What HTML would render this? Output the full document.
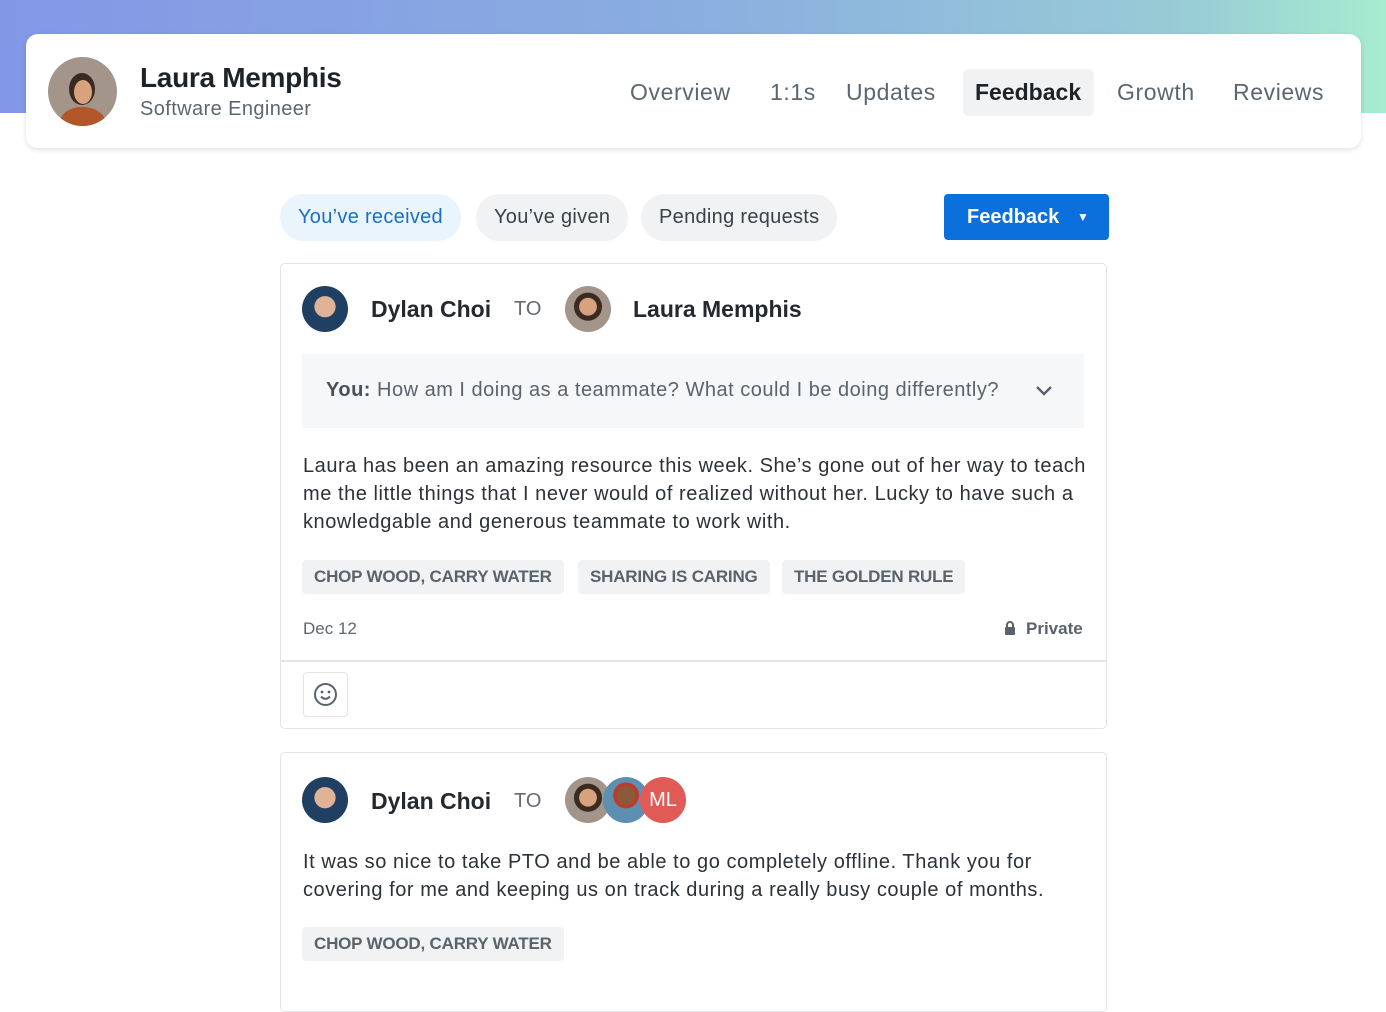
<!DOCTYPE html>
<html><head><meta charset="utf-8"><style>
*{box-sizing:border-box;margin:0;padding:0}
body{width:1386px;height:1000px;overflow:hidden;background:#fff;font-family:"Liberation Sans",sans-serif;position:relative;color:#1f2329}
.abs{position:absolute}
.band{left:0;top:0;width:1386px;height:113px;background:linear-gradient(90deg,#8397e6 0%,#8aaee0 50%,#98cbd6 85%,#a6eccf 100%)}
.hdr{left:26px;top:34px;width:1335px;height:114px;background:#fff;border-radius:12px;box-shadow:0 2px 6px rgba(0,0,0,.12)}
.nav{font-size:23px;color:#5d6670;top:79px;letter-spacing:0.6px}
.pill{top:194px;height:47px;border-radius:24px;background:#f1f2f4;font-size:20px;color:#3b4148;line-height:47px;padding:0 18px;letter-spacing:0.3px}
.card{left:280px;width:827px;border:1.5px solid #e2e4e7;border-radius:5px;background:#fff}
.name{font-size:23px;font-weight:bold;color:#24292f}
.to{font-size:20px;color:#646b73}
.tag{height:34px;line-height:34px;background:#f0f2f4;border-radius:4px;font-size:17px;font-weight:bold;color:#5a626b;padding:0 12px;top:560px;letter-spacing:-0.2px}
.body{font-size:20px;line-height:28px;color:#2c3238;letter-spacing:0.55px}
.av{border-radius:50%;overflow:hidden}
</style></head><body>
<div class="abs band"></div>
<div class="abs hdr"></div>
<svg class="abs" style="left:48px;top:57px" width="69" height="69" viewBox="0 0 69 69"><defs><clipPath id="c1"><circle cx="34.5" cy="34.5" r="34.5"/></clipPath></defs><g clip-path="url(#c1)"><rect width="69" height="69" fill="#a3958a"/><path d="M10 69 Q14 50 34 50 Q55 50 60 69Z" fill="#b3562a"/><ellipse cx="34" cy="32" rx="13" ry="16" fill="#3a2a22"/><ellipse cx="35" cy="35" rx="9" ry="12" fill="#d9a27e"/></g></svg>
<div class="abs" style="left:140px;top:62px;font-size:28px;font-weight:bold;color:#1e2328;letter-spacing:-0.3px">Laura Memphis</div>
<div class="abs" style="left:140px;top:98px;font-size:20px;color:#5d6670;letter-spacing:0.4px">Software Engineer</div>
<div class="abs nav" style="left:630px">Overview</div>
<div class="abs nav" style="left:770px">1:1s</div>
<div class="abs nav" style="left:846px">Updates</div>
<div class="abs" style="left:963px;top:69px;width:131px;height:47px;background:#f1f2f4;border-radius:6px"></div>
<div class="abs nav" style="left:975px;color:#1e2328;font-weight:bold;letter-spacing:0">Feedback</div>
<div class="abs nav" style="left:1117px">Growth</div>
<div class="abs nav" style="left:1233px">Reviews</div>

<div class="abs pill" style="left:280px;background:#eaf4fc;color:#1a6fc4">You’ve received</div>
<div class="abs pill" style="left:476px">You’ve given</div>
<div class="abs pill" style="left:641px">Pending requests</div>
<div class="abs" style="left:944px;top:194px;width:165px;height:46px;background:#0b6fdc;border-radius:4px;color:#fff;font-size:20px;font-weight:bold;line-height:46px;padding-left:23px">Feedback<span style="position:absolute;left:133px;top:0;font-size:12px">▼</span></div>

<div class="abs card" style="top:263px;height:466px"></div>
<div class="abs av" style="left:302px;top:286px;width:46px;height:46px;background:radial-gradient(circle at 50% 45%,#e0b397 0 30%,#1f3f63 32%)"></div>
<div class="abs name" style="left:371px;top:296px">Dylan Choi</div>
<div class="abs to" style="left:514px;top:298px">TO</div>
<div class="abs av" style="left:565px;top:286px;width:46px;height:46px;background:radial-gradient(circle at 50% 45%,#d9a27e 0 25%,#3a2a22 27% 40%,#a3958a 42%)"></div>
<div class="abs name" style="left:633px;top:296px">Laura Memphis</div>
<div class="abs" style="left:302px;top:354px;width:782px;height:74px;background:#f6f7f9"></div>
<div class="abs" style="left:326px;top:379px;font-size:20px;color:#5a626b;letter-spacing:0.5px"><b style="color:#4a5057">You:</b> How am I doing as a teammate? What could I be doing differently?</div>
<svg class="abs" style="left:1034px;top:384px" width="20" height="14" viewBox="0 0 20 14"><path d="M3 3 L10 10 L17 3" fill="none" stroke="#5a626b" stroke-width="2.4"/></svg>
<div class="abs body" style="left:303px;top:452px;width:790px">Laura has been an amazing resource this week. She’s gone out of her way to teach me the little things that I never would of realized without her. Lucky to have such a knowledgable and generous teammate to work with.</div>
<div class="abs tag" style="left:302px">CHOP WOOD, CARRY WATER</div>
<div class="abs tag" style="left:578px">SHARING IS CARING</div>
<div class="abs tag" style="left:782px">THE GOLDEN RULE</div>
<div class="abs" style="left:303px;top:619px;font-size:17px;color:#5d6670">Dec 12</div>
<svg class="abs" style="left:1004px;top:620px" width="12" height="16" viewBox="0 0 12 16"><path d="M3 7V5a3 3 0 0 1 6 0v2" fill="none" stroke="#5a626b" stroke-width="2"/><rect x="1" y="7" width="10" height="8" rx="1" fill="#5a626b"/></svg>
<div class="abs" style="left:1026px;top:619px;font-size:17px;font-weight:bold;color:#5a626b">Private</div>
<div class="abs" style="left:281px;top:660px;width:825px;height:1.5px;background:#e2e4e7"></div>
<div class="abs" style="left:303px;top:672px;width:45px;height:45px;border:1.5px solid #e2e4e7;border-radius:4px"></div>
<svg class="abs" style="left:313px;top:682px" width="25" height="25" viewBox="0 0 25 25"><circle cx="12.5" cy="12.5" r="10.5" fill="none" stroke="#5a626b" stroke-width="2"/><circle cx="9" cy="10" r="1.4" fill="#5a626b"/><circle cx="16" cy="10" r="1.4" fill="#5a626b"/><path d="M8 14.5 Q12.5 19 17 14.5" fill="none" stroke="#5a626b" stroke-width="2"/></svg>

<div class="abs card" style="top:752px;height:260px"></div>
<div class="abs av" style="left:302px;top:777px;width:46px;height:46px;background:radial-gradient(circle at 50% 45%,#e0b397 0 30%,#1f3f63 32%)"></div>
<div class="abs name" style="left:371px;top:788px">Dylan Choi</div>
<div class="abs to" style="left:514px;top:790px">TO</div>
<div class="abs av" style="left:565px;top:777px;width:46px;height:46px;background:radial-gradient(circle at 50% 45%,#d9a27e 0 25%,#3a2a22 27% 40%,#a3958a 42%)"></div>
<div class="abs av" style="left:603px;top:777px;width:46px;height:46px;background:radial-gradient(circle at 50% 40%,#8a5a3a 0 25%,#c0392b 27% 35%,#5d8fb0 37%)"></div>
<div class="abs av" style="left:640px;top:777px;width:46px;height:46px;background:#e05a56;color:#fff;font-size:20px;line-height:46px;text-align:center">ML</div>
<div class="abs body" style="left:303px;top:848px;width:790px">It was so nice to take PTO and be able to go completely offline. Thank you for covering for me and keeping us on track during a really busy couple of months.</div>
<div class="abs tag" style="left:302px;top:927px">CHOP WOOD, CARRY WATER</div>
</body></html>
